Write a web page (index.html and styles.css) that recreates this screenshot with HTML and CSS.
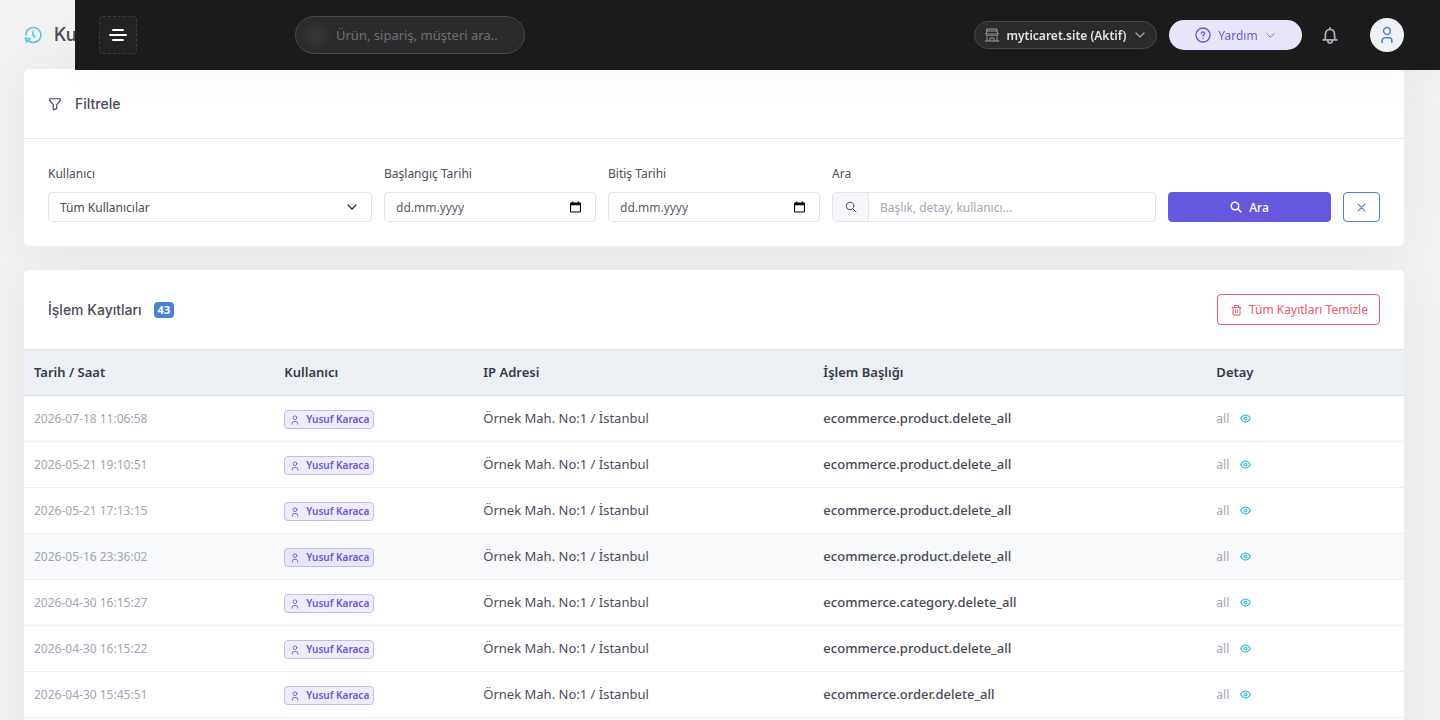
FILE: index.html
```
<!DOCTYPE html>
<html lang="tr">
<head>
  <title>Kullanıcı İşlem Kayıtları</title>
  <meta charset="utf-8">
  <meta name="viewport" content="width=device-width, initial-scale=1">
  <link rel="stylesheet" href="styles.css">
</head>
<body>
  <svg class="sprite" aria-hidden="true">
    <symbol id="i-user" viewBox="0 0 24 24"><circle cx="12" cy="6.500" r="4.500"/><path d="M5.500 22v-2.500a4 4 0 0 1 4-4h5a4 4 0 0 1 4 4V22"/></symbol>
    <symbol id="i-search" viewBox="0 0 24 24"><circle cx="10" cy="10" r="7.500"/><path d="M15.500 15.500L22 22"/></symbol>
    <symbol id="i-down" viewBox="0 0 24 24"><path d="M4 8l8 8 8-8"/></symbol>
    <symbol id="i-eye" viewBox="0 0 24 24"><path d="M1.500 12C4 7 8 4.500 12 4.500S20 7 22.500 12C20 17 16 19.500 12 19.500S4 17 1.500 12z"/><circle cx="12" cy="12" r="3"/></symbol>
    <symbol id="i-cal" viewBox="0 0 12 12"><path d="M2 0h1.500v1h5V0H10v1h1a1 1 0 0 1 1 1v9a1 1 0 0 1-1 1H1a1 1 0 0 1-1-1V2a1 1 0 0 1 1-1h1zM1.200 4v6.800h9.600V4z"/></symbol>
  </svg>

  <header class="topbar">
    <button class="menu-btn" type="button" aria-label="Menü">
      <svg width="18" height="16" viewBox="0 0 18 16"><path d="M4 3h10M1 8h16M4 13h10"/></svg>
    </button>
    <label class="top-search">
      <span class="top-search-glow"></span>
      <input type="search" placeholder="Ürün, sipariş, müşteri ara.." aria-label="Arama">
    </label>
    <div class="topbar-right">
      <button class="store-btn" type="button">
        <svg class="icon" width="14" height="14" viewBox="0 0 14 14"><path d="M2 1h10v2H2zM2 3L1 6h12l-1-3M1 6v1c0 1 3 1 3 0 0 1 3 1 3 0 0 1 3 1 3 0 0 1 3 1 3 0V6M2 9v4M12 9v4M0 13h14M5 13v-3h4v3"/></svg>
        <span>myticaret.site (Aktif)</span>
        <svg class="icon chevron" width="12" height="12"><use href="#i-down"/></svg>
      </button>
      <button class="help-btn" type="button">
        <svg class="icon" width="16" height="16" viewBox="0 0 24 24"><circle cx="12" cy="12" r="10.500"/><path d="M9.500 9.500C9.500 6.500 14.500 6.500 14.500 9.500c0 2-2.500 2-2.500 4M12 17v.5"/></svg>
        <span>Yardım</span>
        <svg class="icon" width="11" height="11"><use href="#i-down"/></svg>
      </button>
      <button class="bell-btn" type="button" aria-label="Bildirimler">
        <svg class="icon" width="18" height="18" viewBox="0 0 24 24"><path d="M3 18.500h18M5 18.500c1-2 1-4 1-8a6 6 0 0 1 12 0c0 4 0 6 1 8M12 4.500V2.500M9 19.500c0 4 6 4 6 0"/></svg>
      </button>
      <button class="avatar" type="button" aria-label="Hesap">
        <svg class="icon" width="18" height="18"><use href="#i-user"/></svg>
      </button>
    </div>
  </header>

  <main class="page">
    <h1 class="page-title">
      <svg class="icon" width="18" height="18" viewBox="0 0 24 24"><path d="M2.500 12A10 10 0 1 1 6 19.500M2 16l1.500 5.500L8 17zM12 7v5.500l2.500 2"/></svg>
      <span>Kullanıcı</span>
    </h1>

    <section class="card">
      <div class="card-header filter-header">
        <svg class="icon" width="14" height="14" viewBox="0 0 24 24"><path d="M3 3h18v3L15 13v7l-6 2v-9L3 6z"/></svg>
        <h2>Filtrele</h2>
      </div>
      <form class="filters">
        <div class="field col-3">
          <label for="user">Kullanıcı</label>
          <div class="control">
            <select id="user"><option>Tüm Kullanıcılar</option></select>
            <svg class="icon select-arrow" width="12" height="12"><use href="#i-down"/></svg>
          </div>
        </div>
        <div class="field col-2">
          <label for="start">Başlangıç Tarihi</label>
          <div class="control date">
            <input id="start" type="text" placeholder="dd.mm.yyyy">
            <svg width="11" height="12"><use href="#i-cal"/></svg>
          </div>
        </div>
        <div class="field col-2">
          <label for="end">Bitiş Tarihi</label>
          <div class="control date">
            <input id="end" type="text" placeholder="dd.mm.yyyy">
            <svg width="11" height="12"><use href="#i-cal"/></svg>
          </div>
        </div>
        <div class="field col-3">
          <label for="q">Ara</label>
          <div class="control">
            <span class="addon"><svg class="icon" width="12" height="12"><use href="#i-search"/></svg></span>
            <input id="q" type="text" placeholder="Başlık, detay, kullanıcı...">
          </div>
        </div>
        <div class="actions col-2">
          <button class="btn btn-primary" type="submit">
            <svg class="icon" width="12" height="12"><use href="#i-search"/></svg>
            <span>Ara</span>
          </button>
          <button class="btn btn-clear" type="reset" aria-label="Temizle">
            <svg class="icon" width="9" height="9" viewBox="0 0 24 24"><path d="M3 3l18 18M21 3L3 21"/></svg>
          </button>
        </div>
      </form>
    </section>

    <section class="card">
      <div class="card-header list-header">
        <h2>İşlem Kayıtları</h2>
        <span class="count">43</span>
        <button class="btn btn-danger" type="button">
          <svg class="icon" width="11" height="12" viewBox="0 0 22 24"><path d="M2 7h18M4 7v15h14V7M7 7V3h8v4M9 12v5M13 12v5"/></svg>
          <span>Tüm Kayıtları Temizle</span>
        </button>
      </div>
      <table class="logs">
        <thead>
          <tr><th class="c-date">Tarih / Saat</th><th class="c-user">Kullanıcı</th><th class="c-ip">IP Adresi</th><th class="c-title">İşlem Başlığı</th><th>Detay</th></tr>
        </thead>
        <tbody id="rows"></tbody>
      </table>
    </section>
  </main>
  <script src="main.js"></script>
</body>
</html>
```
FILE: styles.css
```
* {
  box-sizing: border-box;
}
body {
  margin: 0;
  background: #f2f2f2;
  color: #4b4b5a;
  font: 13px/21px "Noto Sans", sans-serif;
}
button, input, select {
  font: inherit;
  color: inherit;
  margin: 0;
}
button {
  cursor: pointer;
}
h1, h2 {
  margin: 0;
  font-family: Inter, sans-serif;
  font-weight: 500;
}
.sprite {
  display: none;
}
.icon {
  fill: none;
  stroke: currentColor;
  stroke-width: 2;
  stroke-linecap: round;
  stroke-linejoin: round;
  flex: none;
}

/* top bar */
.topbar {
  position: fixed;
  top: 0;
  left: 75px;
  right: 0;
  z-index: 10;
  height: 70px;
  padding: 0 36px 0 24px;
  display: flex;
  align-items: center;
  background: #1b1b1b;
  box-shadow: 0 15px 50px rgba(0, 0, 0, .02);
}
.menu-btn {
  width: 38px;
  height: 38px;
  padding: 0;
  display: flex;
  align-items: center;
  justify-content: center;
  background: #222;
  border: 1px dashed #3c3c3c;
  border-radius: 4px;
}
.menu-btn svg {
  fill: none;
  stroke: #fff;
  stroke-width: 2;
  stroke-linecap: round;
}
.top-search {
  width: 230px;
  height: 38px;
  margin-left: 158px;
  padding: 0 12px 0 4px;
  display: flex;
  align-items: center;
  gap: 4px;
  background: #2b2b2b;
  border: 1px solid #484848;
  border-radius: 19px;
}
.top-search-glow {
  width: 32px;
  height: 32px;
  flex: none;
  border-radius: 50%;
  background: radial-gradient(closest-side, #363837, #2b2b2b);
}
.top-search input {
  min-width: 0;
  flex: 1;
  padding: 0;
  background: none;
  border: 0;
  outline: 0;
  appearance: none;
}
.top-search input::placeholder {
  color: #6c6f76;
}
.topbar-right {
  margin-left: auto;
  display: flex;
  align-items: center;
}
.store-btn, .help-btn {
  display: flex;
  align-items: center;
  justify-content: center;
  border-radius: 15px;
}
.store-btn {
  width: 183px;
  height: 28px;
  padding: 0;
  gap: 7px;
  color: #999;
  background: #2b2b2b;
  border: 1px solid #484848;
}
.store-btn span {
  color: #e4e4e4;
  font-size: 12px;
  font-weight: 600;
}
.store-btn .icon {
  stroke-width: 1;
  overflow: visible;
}
.store-btn .chevron {
  stroke-width: 3;
}
.help-btn {
  width: 133px;
  height: 30px;
  margin-left: 12px;
  padding: 0;
  gap: 7px;
  color: #6658dd;
  background: #e8e6fa;
  border: 0;
  font-size: 12px;
}
.bell-btn {
  width: 36px;
  height: 36px;
  margin-left: 10px;
  padding: 0;
  display: flex;
  align-items: center;
  justify-content: center;
  color: #a6adba;
  background: none;
  border: 0;
}
.bell-btn .icon {
  stroke-width: 2.4;
}
.avatar {
  width: 34px;
  height: 34px;
  margin-left: 22px;
  padding: 0;
  display: flex;
  align-items: center;
  justify-content: center;
  color: #4a81d4;
  background: #eef2f7;
  border: 0;
  border-radius: 50%;
}

/* page */
.page {
  padding: 0 36px 24px 24px;
}
.page-title {
  height: 69px;
  display: flex;
  align-items: center;
  gap: 12px;
  font-size: 18px;
}
.page-title .icon {
  color: #4fc6e1;
}
.card {
  margin-bottom: 24px;
  background: #fff;
  border-radius: 5px;
  box-shadow: 0 0 45px rgba(0, 0, 0, .05);
}
.card-header {
  display: flex;
  align-items: center;
  padding: 24px;
}
.card-header h2 {
  font-size: 14px;
}
.filter-header {
  gap: 13px;
  border-bottom: 1px solid #e7e9eb;
}

/* filter form */
.filters {
  display: grid;
  grid-template-columns: repeat(12, 1fr);
  gap: 12px;
  padding: 24px;
  font-size: 12px;
}
.col-2 {
  grid-column: span 2;
}
.col-3 {
  grid-column: span 3;
}
.field label {
  display: block;
  margin-bottom: 8px;
}
.control {
  position: relative;
  display: flex;
  align-items: center;
  height: 30px;
  border: 1px solid #e3e5e9;
  border-radius: 4px;
  overflow: hidden;
}
.control input, .control select {
  width: 100%;
  height: 28px;
  min-width: 0;
  padding: 0 11px;
  background: none;
  border: 0;
  outline: 0;
  appearance: none;
}
.control input::placeholder {
  color: #a1a7b6;
}
.control.date input::placeholder {
  color: #5a5f6e;
}
.date svg {
  flex: none;
  margin-right: 14px;
  fill: #000;
}
.select-arrow {
  position: absolute;
  right: 13px;
  pointer-events: none;
  stroke-width: 3;
  color: #343a40;
}
.addon {
  width: 36px;
  height: 28px;
  flex: none;
  display: flex;
  align-items: center;
  justify-content: center;
  background: #f5f6fb;
  border-right: 1px solid #e3e5e9;
}
.actions {
  display: flex;
  align-items: flex-end;
  gap: 12px;
}
.btn {
  height: 30px;
  padding: 0 11px;
  display: flex;
  align-items: center;
  justify-content: center;
  gap: 7px;
  border: 1px solid;
  border-radius: 4px;
  background: #fff;
  font-size: 12px;
}
.btn-primary {
  flex: 1;
  color: #fff;
  background: #6658dd;
  border-color: #6658dd;
  font-weight: 500;
}
.btn-primary .icon, .btn-clear .icon {
  stroke-width: 3;
}
.btn-clear {
  width: 37px;
  color: #4a81d4;
}
.btn-danger {
  height: 31px;
  margin-left: auto;
  padding: 0 11px 0 13px;
  color: #f1556c;
}

/* log table */
.list-header {
  gap: 12px;
}
.count {
  padding: 0 4px;
  border-radius: 4px;
  background: #4a81d4;
  color: #fff;
  font-size: 11px;
  font-weight: 700;
  line-height: 16px;
}
.logs {
  width: 100%;
  table-layout: fixed;
  border-collapse: collapse;
}
.logs th, .logs td {
  height: 46px;
  padding: 0 10px;
  text-align: left;
  border-bottom: 1px solid #eceef0;
}
.logs th {
  background: #edf1f5;
  border-top: 1px solid #e3e6e9;
  border-bottom-color: #dadfe4;
  color: #343a46;
  font-weight: 600;
}
.c-date {
  width: 18.14%;
}
.c-user {
  width: 14.42%;
}
.c-ip {
  width: 24.64%;
}
.c-title {
  width: 28.48%;
}
.logs .is-hover {
  background: #f7f9fb;
}
.logs .muted {
  color: #a1a5b3;
  font-size: 12px;
}
.logs .strong {
  color: #464956;
  font-weight: 500;
}
.user-tag {
  display: inline-flex;
  align-items: center;
  gap: 6px;
  padding: 0 4px 0 5px;
  color: #6658dd;
  background: rgba(102, 88, 221, .11);
  border: 1px solid #c2baf1;
  border-radius: 4px;
  font-size: 10px;
  font-weight: 600;
  line-height: 17px;
  vertical-align: middle;
}
.detail {
  display: flex;
  align-items: center;
  gap: 11px;
}
.detail a {
  display: flex;
  color: #4fc6e1;
}
.detail .icon {
  stroke-width: 3;
}
```
FILE: main.js
```
const logs = [
  ['2026-07-18 11:06:58', 'ecommerce.product.delete_all'],
  ['2026-05-21 19:10:51', 'ecommerce.product.delete_all'],
  ['2026-05-21 17:13:15', 'ecommerce.product.delete_all'],
  ['2026-05-16 23:36:02', 'ecommerce.product.delete_all'],
  ['2026-04-30 16:15:27', 'ecommerce.category.delete_all'],
  ['2026-04-30 16:15:22', 'ecommerce.product.delete_all'],
  ['2026-04-30 15:45:51', 'ecommerce.order.delete_all'],
  ['2026-04-30 15:45:40', 'ecommerce.order.delete_all'],
]
document.getElementById('rows').innerHTML = logs.map(([date, title], i) => `
  <tr class="${i === 3 ? 'is-hover' : ''}">
    <td class="muted">${date}</td>
    <td><span class="user-tag"><svg class="icon" width="10" height="10"><use href="#i-user"/></svg>Yusuf Karaca</span></td>
    <td>Örnek Mah. No:1 / İstanbul</td>
    <td class="strong">${title}</td>
    <td class="muted"><div class="detail">all <a href="#" aria-label="Detay"><svg class="icon" width="11" height="11"><use href="#i-eye"/></svg></a></div></td>
  </tr>`).join('')
```
